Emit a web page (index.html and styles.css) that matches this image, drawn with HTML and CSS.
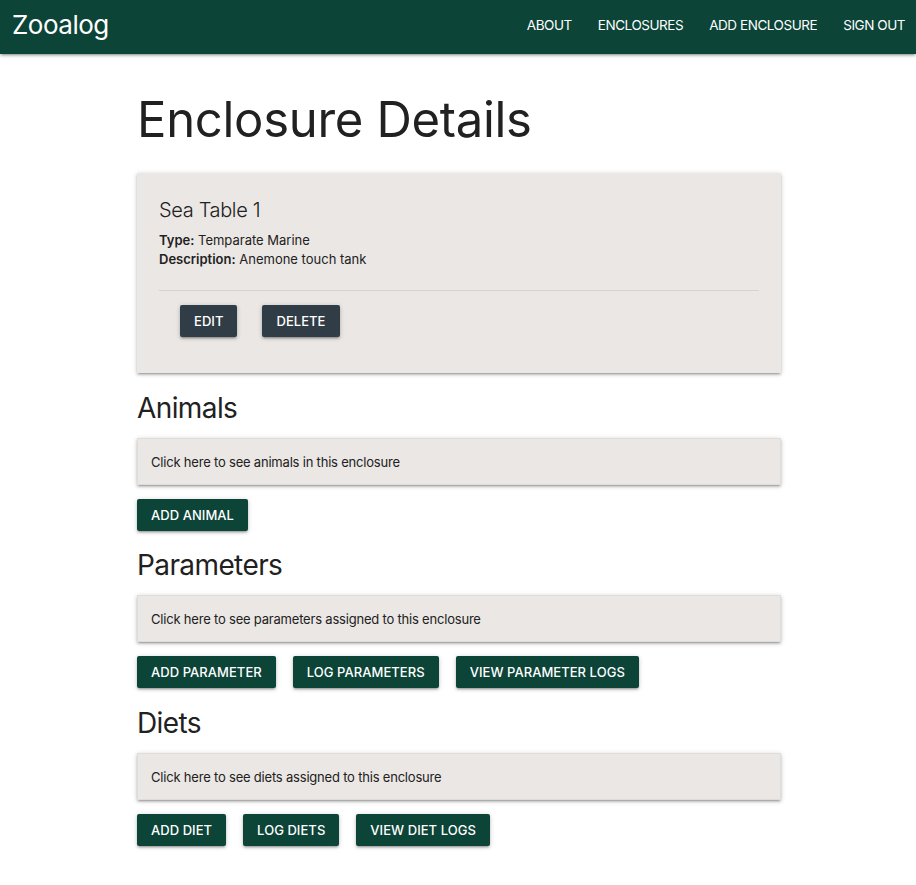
FILE: index.html
```html
<!DOCTYPE html>
<html lang="en">
<head>
<meta charset="utf-8">
<title>Zooalog</title>
<link rel="stylesheet" href="styles.css">
</head>
<body>
<nav class="nav">
  <a class="brand" href="#">Zooalog</a>
  <ul class="nav-links">
    <li><a href="#">ABOUT</a></li>
    <li><a href="#">ENCLOSURES</a></li>
    <li><a href="#">ADD ENCLOSURE</a></li>
    <li><a href="#">SIGN OUT</a></li>
  </ul>
</nav>
<main class="container">
  <h1 class="page-title">Enclosure Details</h1>
  <div class="card">
    <h3 class="card-title">Sea Table 1</h3>
    <p class="card-line"><b>Type:</b> Temparate Marine</p>
    <p class="card-line"><b>Description:</b> Anemone touch tank</p>
    <hr class="divider">
    <div class="card-actions">
      <a class="btn btn-dark" href="#">EDIT</a>
      <a class="btn btn-dark" href="#">DELETE</a>
    </div>
  </div>

  <section class="section">
    <h2 class="section-title">Animals</h2>
    <div class="box">Click here to see animals in this enclosure</div>
    <div class="btn-row">
      <a class="btn" href="#">ADD ANIMAL</a>
    </div>
  </section>

  <section class="section">
    <h2 class="section-title">Parameters</h2>
    <div class="box">Click here to see parameters assigned to this enclosure</div>
    <div class="btn-row">
      <a class="btn" href="#">ADD PARAMETER</a>
      <a class="btn" href="#">LOG PARAMETERS</a>
      <a class="btn" href="#">VIEW PARAMETER LOGS</a>
    </div>
  </section>

  <section class="section section-last">
    <h2 class="section-title">Diets</h2>
    <div class="box">Click here to see diets assigned to this enclosure</div>
    <div class="btn-row">
      <a class="btn" href="#">ADD DIET</a>
      <a class="btn" href="#">LOG DIETS</a>
      <a class="btn" href="#">VIEW DIET LOGS</a>
    </div>
  </section>
</main>
</body>
</html>
```

FILE: styles.css
```css
* { box-sizing: border-box; }

html, body {
  margin: 0;
  padding: 0;
  background: #ffffff;
  font-family: Inter, "Noto Sans", Roboto, "Liberation Sans", sans-serif;
  color: #212121;
}

a { text-decoration: none; }

.nav {
  height: 54px;
  background: #0c4438;
  display: flex;
  align-items: flex-start;
  justify-content: space-between;
  padding: 0 0 0 12px;
  box-shadow: 0 2px 2px 0 rgba(0,0,0,.14), 0 3px 1px -2px rgba(0,0,0,.12), 0 1px 5px 0 rgba(0,0,0,.2);
}

.brand {
  color: #ffffff;
  font-size: 26px;
  font-weight: 400;
  line-height: 49px;
  letter-spacing: -0.5px;
}

.nav-links {
  display: flex;
  gap: 26px;
  list-style: none;
  margin: 0;
  padding: 0 11px 0 0;
}

.nav-links a {
  display: block;
  color: #ffffff;
  font-size: 13.5px;
  font-weight: 400;
  letter-spacing: -0.45px;
  line-height: 51px;
}

.container {
  margin: 0 135px 0 137px;
  padding-bottom: 40px;
}

.page-title {
  font-size: 49px;
  font-weight: 400;
  line-height: 56px;
  margin: 38px 0 25px;
  letter-spacing: -0.3px;
}

.card {
  background: #ebe7e4;
  padding: 23px 22px 36px;
  margin-bottom: 17px;
  box-shadow: 0 2px 2px 0 rgba(0,0,0,.14), 0 3px 1px -2px rgba(0,0,0,.12), 0 1px 5px 0 rgba(0,0,0,.2);
}

.card-title {
  font-size: 20px;
  font-weight: 300;
  line-height: 28px;
  letter-spacing: -0.35px;
  margin: 0 0 7px;
}

.card-line {
  font-size: 13px;
  line-height: 19px;
  margin: 0;
}

.card-line b { font-weight: 600; }

.divider {
  border: none;
  border-top: 1px solid #d8d3d0;
  margin: 21px 0 14px;
}

.card-actions {
  display: flex;
  gap: 25px;
  padding-left: 21px;
}

.section-title {
  font-size: 28px;
  font-weight: 400;
  line-height: 36px;
  letter-spacing: -0.6px;
  margin: 0 0 12px;
}

.section + .section { margin-top: 16px; }
.section + .section-last { margin-top: 17px; }

.box {
  background: #ebe7e4;
  height: 47px;
  display: flex;
  align-items: center;
  padding-left: 13px;
  font-size: 13px;
  letter-spacing: -0.2px;
  margin-bottom: 14px;
  border: 1px solid #e0dcd9;
  box-shadow: 0 2px 2px 0 rgba(0,0,0,.14), 0 3px 1px -2px rgba(0,0,0,.12), 0 1px 5px 0 rgba(0,0,0,.2);
}

.btn-row {
  display: flex;
  gap: 17px;
}

.btn {
  display: inline-flex;
  align-items: center;
  height: 32px;
  padding: 0 14px;
  background: #0c4438;
  color: #ffffff;
  font-size: 13px;
  font-weight: 500;
  letter-spacing: 0.05px;
  border-radius: 2px;
  box-shadow: 0 2px 2px 0 rgba(0,0,0,.14), 0 3px 1px -2px rgba(0,0,0,.12), 0 1px 5px 0 rgba(0,0,0,.2);
}

.btn-dark { background: #313d46; }
```
